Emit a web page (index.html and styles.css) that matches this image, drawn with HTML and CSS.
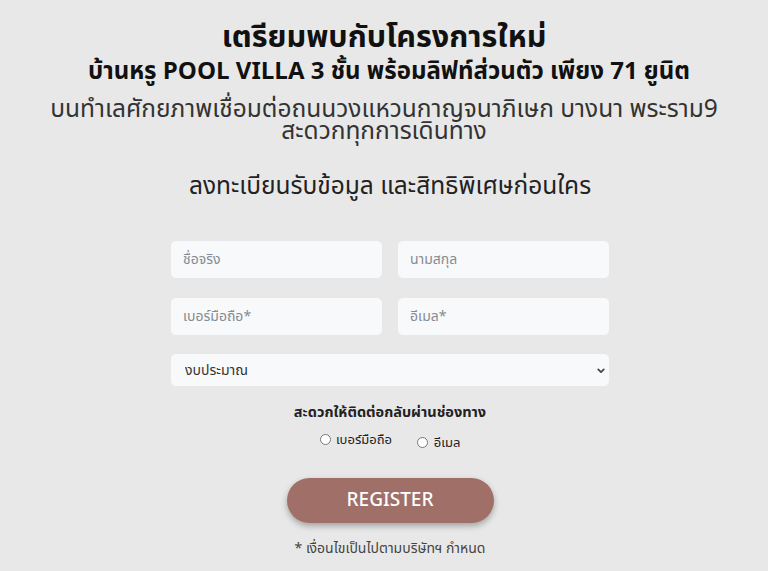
FILE: index.html
```html
<!DOCTYPE html>
<html lang="th">
<head>
  <meta charset="UTF-8">
  <meta name="viewport" content="width=device-width, initial-scale=1.0">
  <title>Register</title>
  <link rel="stylesheet" href="styles.css">
</head>
<body>

  <div class="container">
    <h1>เตรียมพบกับโครงการใหม่</h1>
    <h2>บ้านหรู POOL VILLA 3 ชั้น พร้อมลิฟท์ส่วนตัว เพียง 71 ยูนิต</h2>
    <p class="lead">บนทำเลศักยภาพเชื่อมต่อถนนวงแหวนกาญจนาภิเษก บางนา พระราม9<br>สะดวกทุกการเดินทาง</p>

    <h3>ลงทะเบียนรับข้อมูล และสิทธิพิเศษก่อนใคร</h3>

    <form class="reg-form">
      <div class="row">
        <input type="text" placeholder="ชื่อจริง">
        <input type="text" placeholder="นามสกุล">
      </div>
      <div class="row">
        <input type="tel" placeholder="เบอร์มือถือ*">
        <input type="email" placeholder="อีเมล*">
      </div>
      <div class="select-wrap">
        <select>
          <option>งบประมาณ</option>
        </select>
        <svg class="caret" width="8" height="6" viewBox="0 0 8 6"><path d="M1.2 1.3 L4 4.2 L6.8 1.3" fill="none" stroke="#444" stroke-width="1.7" stroke-linecap="round" stroke-linejoin="round"/></svg>
      </div>

      <div class="contact">
        <p class="contact-label">สะดวกให้ติดต่อกลับผ่านช่องทาง</p>
        <div class="options">
          <label><input type="radio" name="contact"> เบอร์มือถือ</label>
          <label class="low"><input type="radio" name="contact"> อีเมล</label>
        </div>
      </div>

      <button type="button">REGISTER</button>
      <p class="note">* เงื่อนไขเป็นไปตามบริษัทฯ กำหนด</p>
    </form>
  </div>

</body>
</html>
```

FILE: styles.css
```css
body {
  margin: 0;
  background: #e8e8e8;
  color: #222;
  font-family: "Noto Sans Thai", "Noto Sans", "DejaVu Sans", sans-serif;
  text-align: center;
}
.container {
  padding-top: 20px;
}
h1 {
  font-size: 30.5px;
  font-weight: bold;
  margin: 0;
  line-height: 36px;
  color: #111;
}
h2 {
  font-size: 24px;
  font-weight: bold;
  margin: 0;
  padding-left: 10px;
  line-height: 32px;
  color: #111;
}
.lead {
  font-size: 24.5px;
  margin: 11px 0 0;
  line-height: 22px;
  color: #333;
}
h3 {
  font-size: 24.5px;
  font-weight: normal;
  margin: 29px 0 0;
  padding-left: 12px;
  line-height: 30px;
  color: #222;
}
.reg-form {
  width: 440px;
  margin: 38px auto 0;
  position: relative;
  left: 6px;
}
.row {
  display: flex;
  gap: 14px;
  margin-bottom: 18px;
}
.row + .select-wrap {
  margin-top: -1px;
}
.row input {
  flex: 1;
  min-width: 0;
}
input[type="text"],
input[type="tel"],
input[type="email"],
select {
  box-sizing: border-box;
  height: 39px;
  border: 1px solid #e6e8ea;
  border-radius: 6px;
  background: #f8f9fa;
  padding: 0 12px;
  font-family: inherit;
  font-size: 14px;
  color: #333;
}
input::placeholder {
  color: #858b91;
}
.select-wrap {
  position: relative;
}
select {
  width: 100%;
  height: 34px;
  appearance: none;
  padding: 0 14px;
  color: #333;
}
.caret {
  position: absolute;
  right: 5px;
  top: 15px;
}
.contact {
  margin-top: 16px;
}
.contact-label {
  margin: 0 0 7px;
  font-size: 14.5px;
  line-height: 20px;
  font-weight: bold;
  color: #222;
}
.options {
  font-size: 13px;
  line-height: 20px;
}
.options label {
  display: inline-block;
  margin: 0 11px;
  color: #222;
}
.options label.low {
  position: relative;
  top: 3px;
}
.options input[type="radio"] {
  margin: 0 2px 0 0;
  width: 11px;
  height: 11px;
  vertical-align: -1px;
}
button {
  display: block;
  margin: 28px auto 0;
  width: 207px;
  height: 45px;
  border: none;
  border-radius: 23px;
  background: #a07068;
  color: #fff;
  font-family: inherit;
  font-size: 19px;
  font-weight: 500;
  box-shadow: 0 3px 6px rgba(0, 0, 0, 0.3);
  cursor: pointer;
}
.note {
  margin: 16px 0 0;
  font-size: 14px;
  line-height: 20px;
  color: #444;
}
```
